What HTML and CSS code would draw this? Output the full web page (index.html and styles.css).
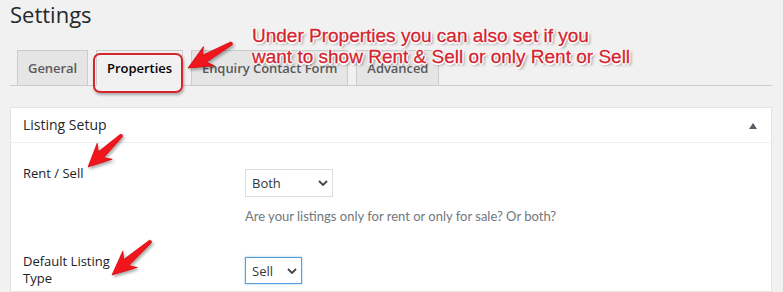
FILE: index.html
```html
<!DOCTYPE html>
<html lang="en">
<head>
<meta charset="utf-8">
<title>Settings</title>
<link rel="stylesheet" href="styles.css">
</head>
<body>
<div class="wrap">
  <h1 class="title">Settings</h1>
  <nav class="tabs">
    <a class="tab">General</a>
    <a class="tab active">Properties</a>
    <a class="tab">Enquiry Contact Form</a>
    <a class="tab">Advanced</a>
  </nav>
  <div class="panel">
    <div class="panel-head">
      <h2 class="panel-title">Listing Setup</h2>
      <span class="toggle"></span>
    </div>
    <div class="panel-body">
      <div class="row">
        <div class="label">Rent / Sell</div>
        <div class="field">
          <div class="select select-both"><span>Both</span><svg class="chev" viewBox="0 0 10 6" width="10" height="6"><path d="M1 1 L5 5 L9 1" fill="none" stroke="#444" stroke-width="1.8"/></svg></div>
          <p class="desc">Are your listings only for rent or only for sale? Or both?</p>
        </div>
      </div>
      <div class="row">
        <div class="label">Default Listing Type</div>
        <div class="field">
          <div class="select select-sell focus"><span>Sell</span><svg class="chev" viewBox="0 0 10 6" width="10" height="6"><path d="M1 1 L5 5 L9 1" fill="none" stroke="#444" stroke-width="1.8"/></svg></div>
        </div>
      </div>
    </div>
  </div>
</div>

<div class="highlight"></div>
<div class="callout">Under Properties you can also set if you<br>want to show Rent &amp; Sell or only Rent or Sell</div>
<svg class="arrows" width="783" height="292" viewBox="0 0 783 292">
  <defs>
    <filter id="sh" x="-50%" y="-50%" width="200%" height="200%">
      <feDropShadow dx="1.5" dy="2" stdDeviation="1.5" flood-color="#000" flood-opacity="0.35"/>
    </filter>
  </defs>
  <g fill="#f0141c" stroke="#c8000a" stroke-width="0.6" filter="url(#sh)">
    <polygon transform="translate(188 68) rotate(150.4)" points="0,0 -24,-11 -19,-4 -50,-1.6 -51,0 -50,1.6 -19,4 -24,11"/>
    <polygon transform="translate(88 167) rotate(136.7)" points="0,0 -23,-11 -18,-4 -46,-1.6 -47,0 -46,1.6 -18,4 -23,11"/>
    <polygon transform="translate(112 275) rotate(138.9)" points="0,0 -24,-11 -19,-4 -51,-1.6 -52,0 -51,1.6 -19,4 -24,11"/>
  </g>
</svg>
</body>
</html>
```

FILE: styles.css
```css
* { box-sizing: border-box; }

html, body {
  margin: 0;
  padding: 0;
  background: #f1f1f1;
}

body {
  position: relative;
  width: 783px;
  height: 292px;
  overflow: hidden;
  font-family: "Open Sans", "Noto Sans", sans-serif;
  color: #23282d;
}

.wrap {
  padding: 0 11px 0 10px;
}

.title {
  margin: 0;
  font-size: 22px;
  font-weight: 400;
  line-height: 29px;
  color: #23282d;
}

.tabs {
  display: flex;
  margin-top: 21px;
  padding-left: 7px;
  border-bottom: 1px solid #cccccc;
  gap: 8px;
}

.tab {
  display: block;
  padding: 5px 10px;
  line-height: 24px;
  font-size: 13px;
  font-weight: 600;
  letter-spacing: -0.05px;
  color: #5a5a5a;
  background: #e5e5e5;
  border: 1px solid #cccccc;
  border-bottom: none;
  white-space: nowrap;
}

.tab.active {
  background: #f1f1f1;
  color: #000000;
  border-bottom: 1px solid #f1f1f1;
  margin-bottom: -1px;
}

.panel {
  margin-top: 21px;
  background: #ffffff;
  border: 1px solid #e5e5e5;
  box-shadow: 0 1px 1px rgba(0, 0, 0, 0.04);
  height: 185px;
}

.panel-head {
  display: flex;
  align-items: center;
  justify-content: space-between;
  height: 35px;
  padding: 0 14px 0 12px;
  border-bottom: 1px solid #eeeeee;
}

.panel-title {
  margin: 0;
  font-size: 14px;
  font-weight: 400;
  line-height: 34px;
  color: #23282d;
}

.toggle {
  width: 0;
  height: 0;
  border-left: 4.5px solid transparent;
  border-right: 4.5px solid transparent;
  border-bottom: 6px solid #555d66;
  margin-top: 1px;
}

.panel-body {
  padding: 0 12px;
}

.row {
  display: grid;
  grid-template-columns: 222px 1fr;
}

.row + .row {
  margin-top: 6px;
}

.label {
  max-width: 110px;
  padding-top: 22px;
  font-size: 13px;
  line-height: 17px;
  color: #1d2327;
}

.field {
  padding-top: 26px;
}

.select {
  display: flex;
  align-items: center;
  justify-content: space-between;
  height: 28px;
  padding: 0 4px 0 6px;
  border: 1px solid #dddddd;
  background: #ffffff;
  font-size: 13px;
  color: #32373c;
}

.select-both { width: 88px; }
.select-sell { width: 57px; height: 27px; }

.select.focus {
  border-color: #5b9dd9;
  box-shadow: 0 0 2px rgba(30, 140, 190, 0.5);
}

.chev { display: block; }

.desc {
  margin: 10px 0 0;
  font-family: Lato, "Open Sans", sans-serif;
  font-size: 13px;
  line-height: 18px;
  color: #72777c;
}

.highlight {
  position: absolute;
  left: 93px;
  top: 53px;
  width: 90px;
  height: 40px;
  border: 2px solid #d5262e;
  border-radius: 7px;
  box-shadow: 1px 2px 3px rgba(0, 0, 0, 0.3), inset 0 0 1px rgba(255, 255, 255, 0.8);
}

.callout {
  position: absolute;
  left: 252px;
  top: 25px;
  font-family: "Liberation Sans", Arial, sans-serif;
  font-size: 19px;
  line-height: 21px;
  color: #d42530;
  -webkit-text-stroke: 0.3px #d42530;
  white-space: nowrap;
  text-shadow: -1px -1px 0 #fff, 1px -1px 0 #fff, -1px 1px 0 #fff, 1px 1px 0 #fff, 0 1.5px 0 #fff, 1.5px 0 0 #fff, 2px 2px 3px rgba(0, 0, 0, 0.5);
}

.arrows {
  position: absolute;
  left: 0;
  top: 0;
  pointer-events: none;
}
```
